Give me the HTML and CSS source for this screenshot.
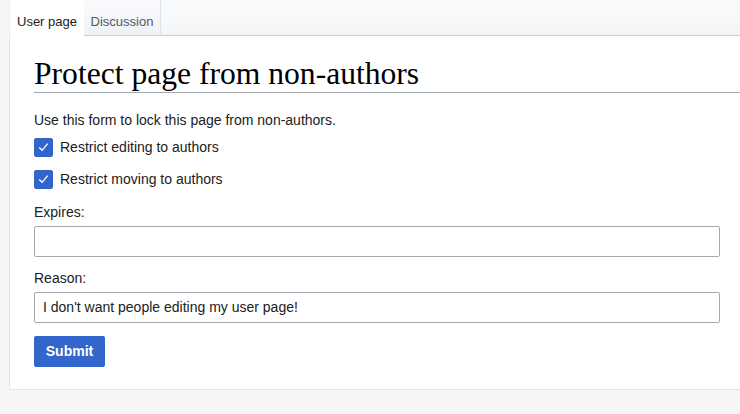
FILE: index.html
```html
<!DOCTYPE html>
<html lang="en">
<head>
<meta charset="utf-8">
<title>Protect page from non-authors</title>
<link rel="stylesheet" href="styles.css">
</head>
<body>
<div class="page">
  <div class="tabbar">
    <div class="tab tab-active">User page</div>
    <div class="tab tab-other">Discussion</div>
    <div class="tab-fill"></div>
  </div>
  <div class="content">
    <h1 class="title">Protect page from non-authors</h1>
    <p class="intro">Use this form to lock this page from non-authors.</p>
    <label class="check-row">
      <span class="checkbox"><svg viewBox="0 0 18 18" width="18" height="18"><path d="M4.5 9.5 L7.5 12.5 L13.5 5.5" fill="none" stroke="#fff" stroke-width="1.4"/></svg></span>
      <span class="check-label">Restrict editing to authors</span>
    </label>
    <label class="check-row">
      <span class="checkbox"><svg viewBox="0 0 18 18" width="18" height="18"><path d="M4.5 9.5 L7.5 12.5 L13.5 5.5" fill="none" stroke="#fff" stroke-width="1.4"/></svg></span>
      <span class="check-label">Restrict moving to authors</span>
    </label>
    <div class="field">
      <div class="field-label">Expires:</div>
      <div class="input"></div>
    </div>
    <div class="field">
      <div class="field-label">Reason:</div>
      <div class="input">I don't want people editing my user page!</div>
    </div>
    <div class="button">Submit</div>
  </div>
</div>
</body>
</html>
```
FILE: styles.css
```css
html, body {
  margin: 0;
  padding: 0;
}
body {
  background: #f6f6f6;
  font-family: "Liberation Sans", Arial, sans-serif;
  color: #202122;
  width: 740px;
  height: 414px;
  overflow: hidden;
}
.page {
  padding-left: 9px;
}
.tabbar {
  display: flex;
  height: 36px;
  background: linear-gradient(to bottom, #f8f9fa 0%, #f8f9fa 40%, #f3f4f4 100%);
}
.tab {
  box-sizing: border-box;
  height: 36px;
  font-size: 13px;
  padding-top: 14px;
  text-align: center;
  white-space: nowrap;
}
.tab-active {
  width: 75px;
  background: #fff;
  color: #202122;
  border-left: 1px solid #eaecf0;
}
.tab-other {
  width: 77px;
  color: #54595d;
  background: linear-gradient(to bottom, #fafbfc 0%, #eef2f6 100%);
  border-right: 1px solid #dde3ea;
  border-bottom: 1px solid #a7d7f9;
}
.tab-fill {
  flex: 1;
  border-bottom: 1px solid #c8ccd1;
}
.content {
  background: #fff;
  border-left: 1px solid #e4e6e9;
  border-bottom: 1px solid #e4e6e9;
  padding: 20px 0 22px 24px;
}
.title {
  margin: 0;
  font-family: "Liberation Serif", Georgia, serif;
  font-weight: normal;
  font-size: 31.6px;
  line-height: 36px;
  color: #000;
  border-bottom: 1px solid #a2a9b1;
  padding-bottom: 0;
}
.intro {
  margin: 17px 0 0 0;
  font-size: 14px;
  line-height: 20px;
}
.check-row {
  display: flex;
  align-items: center;
  margin-top: 5px;
  height: 24px;
}
.check-row + .check-row {
  margin-top: 8px;
}
.checkbox {
  box-sizing: border-box;
  width: 19px;
  height: 19px;
  background: #3366cc;
  border: 1px solid #3366cc;
  border-radius: 2px;
  display: flex;
  align-items: center;
  justify-content: center;
}
.checkbox svg {
  display: block;
}
.check-label {
  margin-left: 7px;
  font-size: 14px;
}
.field {
  margin-top: 8px;
}
.field-label {
  font-size: 14px;
  line-height: 20px;
  padding: 3px 0 4px 0;
}
.input {
  box-sizing: border-box;
  width: 686px;
  height: 31px;
  border: 1px solid #a2a9b1;
  border-radius: 2px;
  font-size: 14px;
  line-height: 29px;
  padding: 0 8px;
  color: #202122;
}
.button {
  margin-top: 13px;
  box-sizing: border-box;
  width: 71px;
  height: 31px;
  line-height: 31px;
  text-align: center;
  background: #3366cc;
  color: #fff;
  font-weight: bold;
  font-size: 14px;
  border-radius: 2px;
}
```
